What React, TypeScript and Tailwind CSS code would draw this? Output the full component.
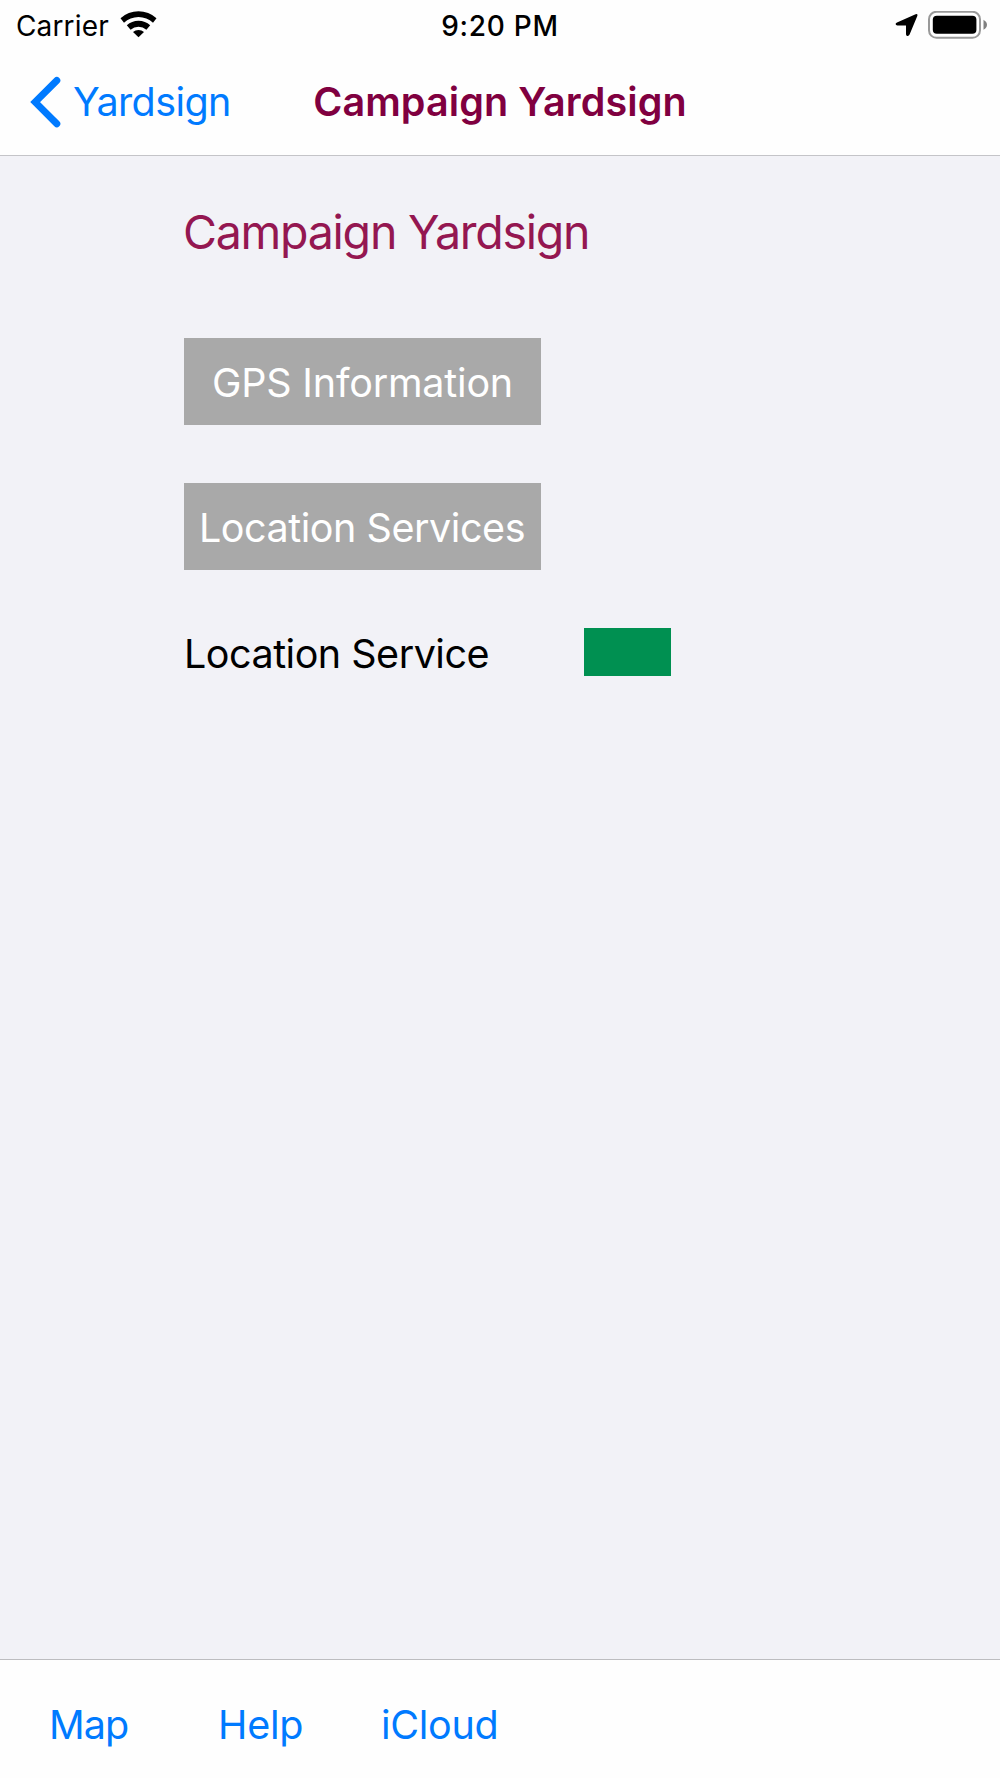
const toolbarItems = [
  { label: "Map", className: "w-[169px] tracking-[-0.9px]" },
  { label: "Help", className: "w-[163px] tracking-[-0.2px]" },
  { label: "iCloud", className: "tracking-[-0.3px]" },
];

function StatusBar() {
  return (
    <div className="grid h-[51px] grid-cols-3 items-center text-[28px] leading-none text-black">
      <div className="flex items-center pl-4">
        <span className="tracking-[0.15px]">Carrier</span>
        <svg className="ml-[11px] -mt-1" width="38" height="28" viewBox="0 0 38 28">
          <path d="M0.5 8.2 A26.5 26.5 0 0 1 36.5 8.2 L33 12.8 A21 21 0 0 0 4 12.8 Z" />
          <path d="M6.8 15.3 A17 17 0 0 1 30.2 15.3 L26.4 19.7 A12.2 12.2 0 0 0 10.6 19.7 Z" />
          <path d="M13 21.9 A8.6 8.6 0 0 1 24 21.9 L18.5 27.3 Z" />
        </svg>
      </div>
      <span className="text-center font-medium tracking-[0.75px]">9:20 PM</span>
      <div className="-mt-0.5 flex items-center justify-end pr-[11px]">
        <svg width="24" height="24" viewBox="0 0 24 24">
          <path d="M2 9.4 L20.6 1.2 Q23 0.4 22.4 2.8 L14.6 21.5 Q13.6 23.6 11.7 22.7 Q11 22.2 11 21 V12.6 H2.4 Q0.6 12.4 0.6 11 Q0.6 10 2 9.4 Z" />
        </svg>
        <svg className="ml-[9px]" width="61" height="28" viewBox="0 0 61 28">
          <rect x="1" y="0.8" width="51" height="26" rx="7.5" fill="#fff" stroke="#999" strokeWidth="2" />
          <rect x="4.8" y="4.8" width="43.6" height="18" rx="4" />
          <path d="M55.5 8.8 Q59 11 59 13.8 Q59 16.8 55.5 18.8 Z" fill="#808080" />
        </svg>
      </div>
    </div>
  );
}

function NavBar() {
  return (
    <div className="grid h-[102px] grid-cols-[1fr_auto_1fr] items-center text-[39.5px] leading-none">
      <button className="flex items-center pl-[30px] text-[#007aff]">
        <svg width="32" height="52" viewBox="0 0 32 52" fill="none" stroke="currentColor" strokeWidth="7" strokeLinecap="round" strokeLinejoin="miter">
          <path d="M26.8 4.5 L5.2 26.1 L26.8 47.7" />
        </svg>
        <span className="ml-[11px] pt-0.5 tracking-[-0.6px]">Yardsign</span>
      </button>
      <h1 className="pt-0.5 font-semibold tracking-[0.1px] text-[#800040]">Campaign Yardsign</h1>
      <span />
    </div>
  );
}

export default function App() {
  return (
    <div className="flex h-[1778px] w-[1000px] flex-col overflow-hidden bg-[#f2f2f7] font-['Inter',sans-serif]">
      <header className="h-[156px] border-b border-[#c4c4c8] bg-[#fefefe]">
        <StatusBar />
        <NavBar />
      </header>

      <main className="flex flex-1 flex-col items-start pl-[184px] pt-[52px] text-[39.5px] leading-none">
        <h2 className="-ml-px flex h-12 items-center text-[46.5px] tracking-[-1.25px] text-[#941751]">
          Campaign Yardsign
        </h2>
        <button className="mt-[82px] flex h-[87px] w-[357px] items-center justify-center bg-[#a9a9a9] pt-1 tracking-[-0.2px] text-white">
          GPS Information
        </button>
        <button className="mt-[58px] flex h-[87px] w-[357px] items-center justify-center bg-[#a9a9a9] pt-1 pr-px tracking-[-0.45px] text-white">
          Location Services
        </button>
        <div className="mt-[58px] flex h-12 items-center">
          <span className="w-[400px] pt-[5px] tracking-[-0.5px] text-black">Location Service</span>
          <div className="h-12 w-[87px] bg-[#009051]" />
        </div>
      </main>

      <footer className="flex h-[119px] items-center border-t border-[#bdbdc0] bg-[#fefefe] pl-[49px] pt-[13px] text-[39.5px] leading-none text-[#007aff]">
        {toolbarItems.map((item) => (
          <button key={item.label} className={`text-left ${item.className}`}>
            {item.label}
          </button>
        ))}
      </footer>
    </div>
  );
}
